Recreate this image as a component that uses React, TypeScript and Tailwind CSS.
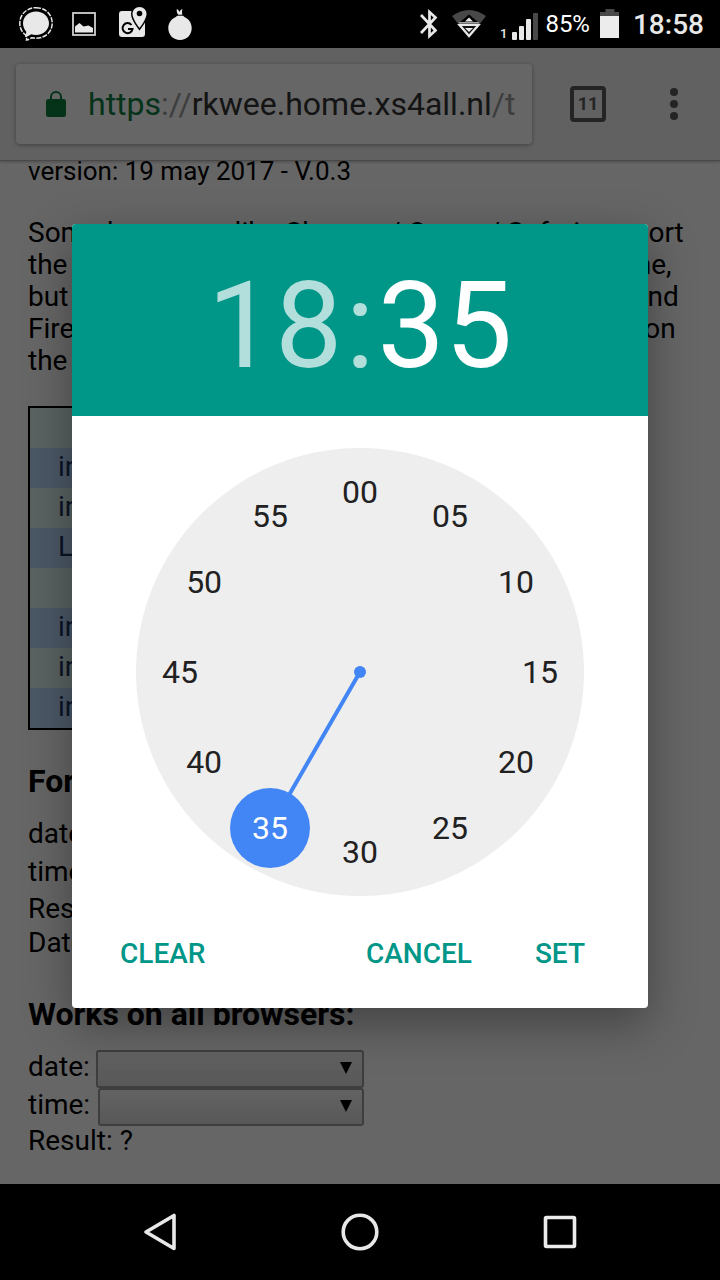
import React from "react";

const minutes = ["00", "05", "10", "15", "20", "25", "30", "35", "40", "45", "50", "55"];
const selectedMinute = "35";

const tableRows = [
  "",
  "input type=date",
  "input type=time",
  "Local date",
  "",
  "input value",
  "input min",
  "input max",
];

function StatusBar() {
  return (
    <header className="flex h-12 items-center justify-between bg-black pr-4 pl-3 text-[#e8e8e8]">
      <div className="flex">
        <svg className="size-12" viewBox="0 0 48 48" fill="none">
          <path
            d="M24 11.500c7.500 0 13 5.200 13 11.800S31.500 35 24 35c-1.800 0-3.400-.3-4.900-.8-1.800 1.500-3.900 2.500-6.300 2.700 1-1.500 1.500-3.300 1.400-5.200-2-2.200-3.200-5.200-3.200-8.400 0-6.600 5.500-11.800 13-11.800z"
            fill="#e8e8e8"
          />
          <path
            d="M24 7.700c9.400 0 16.200 6.800 16.200 15.500S33.400 38.200 24 38.200c-1.400 0-2.800-.2-4.100-.5-1.900 1.300-3.500 2-5.400 2.300l.3-3-1.500-2.300C9.700 31.900 7.800 27.900 7.800 23.200 7.800 14.500 14.600 7.700 24 7.700z"
            stroke="#e8e8e8"
            strokeWidth="1.500"
            strokeDasharray="5 1.300"
          />
        </svg>
        <svg className="size-12" viewBox="0 0 48 48" fill="none">
          <rect x="13" y="13" width="22" height="22" stroke="#d0d0d0" strokeWidth="1.800" />
          <path d="M15 32.500v-6l4.500-3.500 4 3.500 5-1 4.500 2.500v4.500z" fill="#e8e8e8" />
        </svg>
        <svg className="size-12" viewBox="0 0 48 48" fill="none">
          <rect x="11" y="11" width="26" height="26" rx="3" fill="#e8e8e8" />
          <path d="M23.500 25A5 5 0 1 0 24.500 29H20" stroke="#000" strokeWidth="2" />
          <path
            d="M31.500 7c-4 0-7 3-7 7 0 5 7 14 7 14s7-9 7-14c0-4-3-7-7-7z"
            fill="#e8e8e8"
            stroke="#000"
            strokeWidth="3"
            paintOrder="stroke"
          />
          <circle cx="31.500" cy="13.500" r="2.800" fill="#000" />
        </svg>
        <svg className="size-12" viewBox="0 0 48 48" fill="#e8e8e8">
          <path d="M22 14.500l-.8-1.500c-.3-1-.6-2.500-.4-4 1.300.6 2.200 1.600 2.700 3 .6-1.500 1.600-2.600 3-3-.6 1.500-.5 3.500-.3 5.500.6 1.400 2 2.400 4 3.500 3.500 2 5.500 5.700 5.500 10C35.700 35 30.800 40 24 40s-11.700-5-11.700-12c0-4.300 2.200-8 5.700-10 2-1.100 3.800-2.100 4-3.500z" />
          <path d="M20.500 15.200h6.500" stroke="#000" strokeWidth="1" />
        </svg>
      </div>
      <div className="flex h-full items-center">
        <svg className="h-12 w-5" viewBox="0 0 20 48" fill="none">
          <path
            d="M2 15l14.500 15.500L10.500 36V12L16.500 17.500 2 33"
            stroke="#e8e8e8"
            strokeWidth="2.700"
          />
        </svg>
        <svg className="ml-3 h-12 w-9" viewBox="0 0 36 48" fill="none">
          <path d="M1 16Q18 4 35 16L18 38z" fill="#484848" />
          <path d="M9 22l9-7.500 9 7.500z" fill="#000" />
          <path d="M14 21.500l4-4 4 4z" fill="#e8e8e8" />
          <path d="M8.500 25h19L18 36z" fill="#111" stroke="#e8e8e8" strokeWidth="2.200" />
          <path d="M14 28h8l-4 4z" fill="#e8e8e8" />
          <path d="M8 22.800h20" stroke="#c8c8c8" strokeWidth="1" />
        </svg>
        <span className="mt-5 ml-2 w-3 text-right text-[13px] leading-4 font-medium">1</span>
        <svg className="ml-1 h-12 w-7" viewBox="0 0 28 48" fill="#e8e8e8">
          <rect x="1" y="32" width="5" height="8" rx="1" />
          <rect x="8" y="26" width="5" height="14" rx="1" />
          <rect x="15" y="19" width="5" height="21" rx="1" />
          <rect x="22" y="13" width="5" height="27" rx="1" fill="#484848" />
        </svg>
        <span className="ml-1.5 text-2xl text-white">85%</span>
        <svg className="ml-2.5 h-12 w-5" viewBox="0 0 20 48">
          <path d="M5.500 9h9v3H19v5H0v-5h5.500z" fill="#484848" />
          <rect x="0" y="16" width="19" height="22" fill="#ececec" />
        </svg>
        <time className="ml-[13px] pt-0.5 text-[28px] font-medium">18:58</time>
      </div>
    </header>
  );
}

function Toolbar() {
  return (
    <div className="flex items-center border-b border-[#b4b4b4] bg-[#f2f2f2] py-4 pl-4 shadow-[0_1px_3px_rgba(0,0,0,0.25)]">
      <div className="flex h-20 min-w-0 flex-1 items-center overflow-hidden rounded bg-white pl-[30px] shadow-[0_1px_4px_rgba(0,0,0,0.35)]">
        <svg className="h-7 w-5 shrink-0" viewBox="0 0 20 28" fill="none">
          <rect x="0" y="9" width="20" height="18" rx="2.500" fill="#0b8043" />
          <path d="M5 10V7a5 5 0 0 1 10 0v3" stroke="#0b8043" strokeWidth="2" />
        </svg>
        <span className="ml-[22px] text-[32px] whitespace-nowrap text-[#333]">
          <span className="text-[#0b8043]">https</span>
          <span className="text-[#999]">://</span>
          rkwee.home.xs4all.nl
          <span className="text-[#999]">/t</span>
        </span>
      </div>
      <button
        aria-label="Switch tabs"
        className="ml-[38px] flex size-9 items-center justify-center rounded border-4 border-[#5a5a5a] text-lg font-bold text-[#5a5a5a]"
      >
        11
      </button>
      <button aria-label="More options" className="mr-7 ml-[50px] flex w-9 justify-center">
        <svg className="h-8 w-2" viewBox="0 0 8 32" fill="#5a5a5a">
          <circle cx="4" cy="4" r="4" />
          <circle cx="4" cy="16" r="4" />
          <circle cx="4" cy="28" r="4" />
        </svg>
      </button>
    </div>
  );
}

function PickerSelect({ id, label, width }: { id: string; label: string; width: string }) {
  return (
    <div className="flex w-[336px] justify-between">
      <label htmlFor={id} className="leading-[34px]">
        {label}
      </label>
      <div className={`relative ${width}`}>
        <select
          id={id}
          className="block h-[38px] w-full appearance-none rounded-[3px] border-2 border-[#9c9c9c] bg-linear-to-b from-[#f6f6f6] to-[#dcdcdc]"
        />
        <svg className="pointer-events-none absolute top-3 right-3 h-3 w-3" viewBox="0 0 12 12">
          <path d="M0 0h12L6 12z" fill="#000" />
        </svg>
      </div>
    </div>
  );
}

function PageContent() {
  return (
    <main className="px-7 text-[28px] whitespace-nowrap text-black">
      <p className="text-[26px] leading-5">version: 19 may 2017 - V.0.3</p>
      <p className="mt-9 leading-8">
        Some browsers, like Chrome / Opera / Safari support
        <br />
        the html-5 input types for the input of date and time,
        <br />
        but in other browsers like Internet Explorer, Edge and
        <br />
        Firefox do not. This page shows a fallback option on
        <br />
        the other browsers.
      </p>
      <table className="mt-[29px] w-[500px] border-separate border-spacing-0 border-2 border-black text-[#1c325f]">
        <tbody>
          {tableRows.map((text, i) => (
            <tr key={i} className="h-10 odd:bg-[#e2f5f5] even:bg-[#bcdcff]">
              <td className="py-0 pl-7 align-top leading-[38px]">{text}</td>
            </tr>
          ))}
        </tbody>
      </table>
      <h2 className="mt-[31px] text-[32px] leading-10 font-bold">For Chrome / Opera:</h2>
      <div className="mt-4">
        <PickerSelect id="native-date" label="date:" width="w-[268px]" />
        <PickerSelect id="native-time" label="time:" width="w-[266px]" />
        <p className="leading-8">Result: ?</p>
        <p className="leading-9">Date: ?</p>
      </div>
      <h2 className="mt-[33px] text-[32px] leading-10 font-bold">Works on all browsers:</h2>
      <div className="mt-4">
        <PickerSelect id="all-date" label="date:" width="w-[268px]" />
        <PickerSelect id="all-time" label="time:" width="w-[266px]" />
        <p className="leading-[30px]">Result: ?</p>
      </div>
    </main>
  );
}

function ClockFace() {
  return (
    <div className="relative mx-auto aspect-square w-full max-w-[448px] rounded-full bg-[#eee]">
      <svg className="absolute inset-0 size-full" viewBox="-224 -224 448 448">
        <line x1="0" y1="0" x2="-90" y2="156" stroke="#4285f4" strokeWidth="4" />
        <circle r="6" fill="#4285f4" />
        <circle cx="-90" cy="156" r="40" fill="#4285f4" />
      </svg>
      {minutes.map((m, i) => {
        const angle = (i * Math.PI) / 6;
        return (
          <button
            key={m}
            className={`absolute size-20 -translate-1/2 rounded-full text-[32px] ${
              m === selectedMinute ? "text-white" : "text-[#212121]"
            }`}
            style={{
              left: `${50 + 40.18 * Math.sin(angle)}%`,
              top: `${50 - 40.18 * Math.cos(angle)}%`,
            }}
          >
            {m}
          </button>
        );
      })}
    </div>
  );
}

function TimeDialog() {
  return (
    <section
      role="dialog"
      aria-label="Set time"
      className="w-full overflow-hidden rounded bg-white shadow-[0_16px_48px_rgba(0,0,0,0.35)]"
    >
      <div className="flex h-48 items-center justify-center bg-[#009688] pt-3 text-[120px] leading-none text-[#b2dfdb]">
        <button>18</button>
        <span className="px-[3px]">:</span>
        <button className="text-white">35</button>
      </div>
      <div className="px-8 pt-8">
        <ClockFace />
      </div>
      <div className="flex h-28 items-center px-12 pt-1 text-[28px] font-medium text-[#009688]">
        <button>CLEAR</button>
        <button className="ml-auto">CANCEL</button>
        <button className="mr-[15px] ml-[63px]">SET</button>
      </div>
    </section>
  );
}

function NavBar() {
  return (
    <nav className="grid h-24 grid-cols-3 items-center justify-items-center bg-black px-[60px]">
      <button aria-label="Back">
        <svg className="size-12" viewBox="0 0 48 48" fill="none">
          <path d="M38 7.500v33L10 24z" stroke="#e8e8e8" strokeWidth="3.600" strokeLinejoin="round" />
        </svg>
      </button>
      <button aria-label="Home">
        <svg className="size-12" viewBox="0 0 48 48" fill="none">
          <circle cx="24" cy="24" r="16.800" stroke="#e8e8e8" strokeWidth="3.600" />
        </svg>
      </button>
      <button aria-label="Recent apps">
        <svg className="size-12" viewBox="0 0 48 48" fill="none">
          <rect x="9.500" y="9.500" width="29" height="29" rx="1" stroke="#ececec" strokeWidth="3.600" />
        </svg>
      </button>
    </nav>
  );
}

export default function App() {
  return (
    <div className="flex min-h-screen flex-col font-[Roboto,sans-serif]">
      <StatusBar />
      <div className="relative flex-1 overflow-hidden bg-white pb-7">
        <Toolbar />
        <PageContent />
        <div className="absolute inset-0 flex items-center bg-black/60 px-[72px]">
          <TimeDialog />
        </div>
      </div>
      <NavBar />
    </div>
  );
}
